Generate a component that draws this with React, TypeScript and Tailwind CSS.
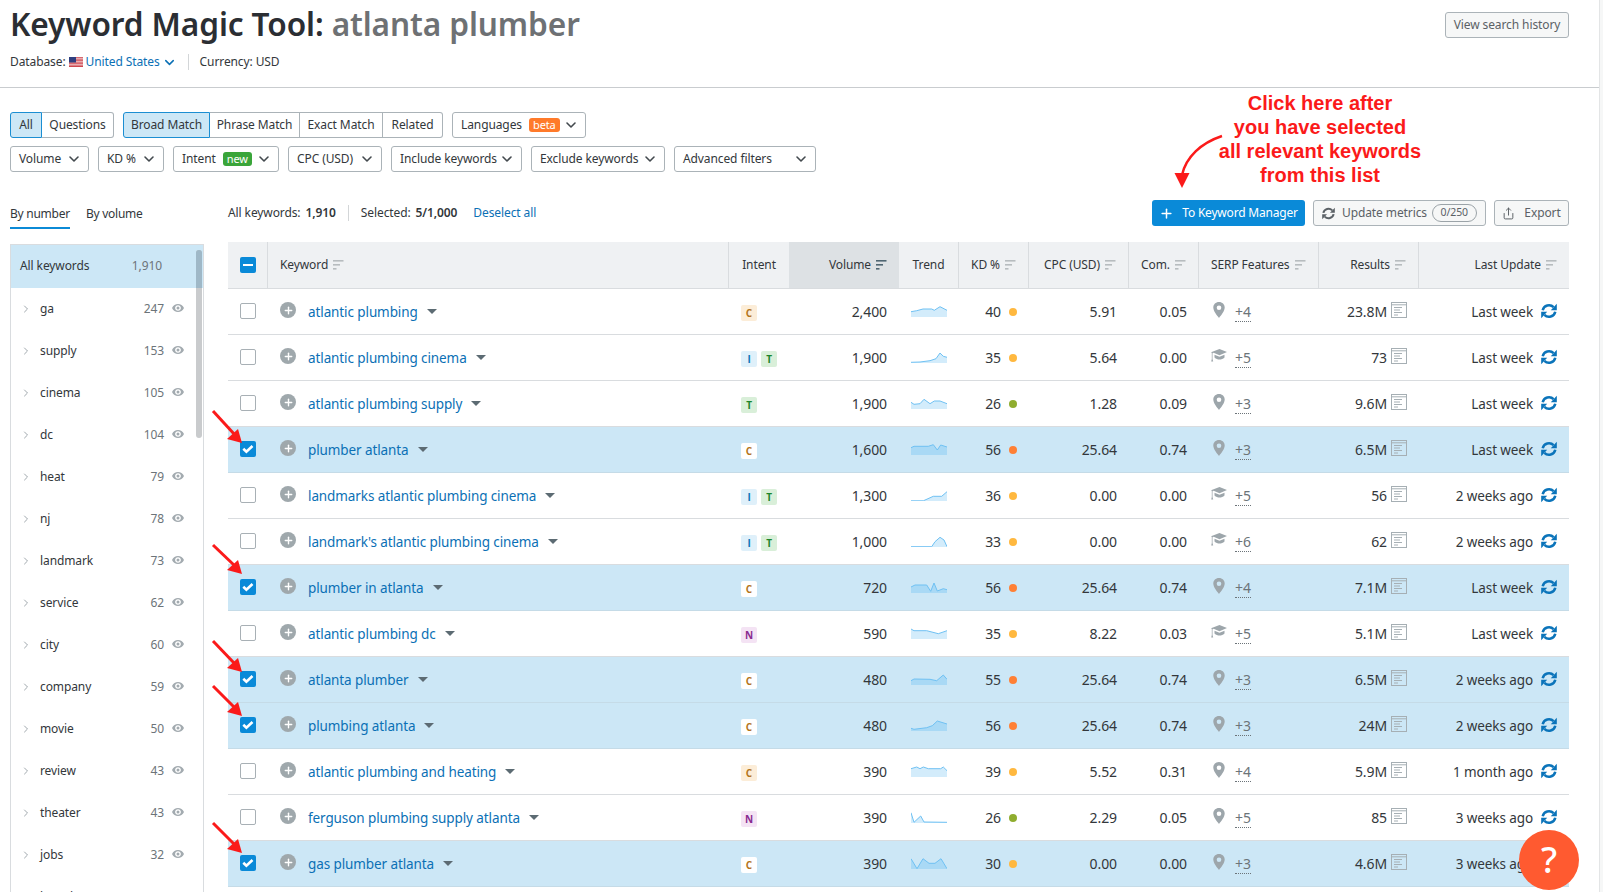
import React from "react";
import { ChevronDown, ChevronRight, Plus, Share } from "lucide-react";

type Row = {
  kw: string; intent: string[]; vol: string; kd: string; dot: string; cpc: string; com: string;
  serp: "pin" | "cap"; more: string; res: string; upd: string; sel?: boolean; pts: string;
};

const Y = "bg-[#ffb83f]";
const G = "bg-[#8fad2f]";
const O = "bg-[#ff8035]";

const rows: Row[] = [
  { kw: "atlantic plumbing", intent: ["C"], vol: "2,400", kd: "40", dot: Y, cpc: "5.91", com: "0.05", serp: "pin", more: "+4", res: "23.8M", upd: "Last week", pts: "0,6.7 5.7,5.7 12,4 20.7,4 23.3,5.3 29,1.7 36,5.3" },
  { kw: "atlantic plumbing cinema", intent: ["I", "T"], vol: "1,900", kd: "35", dot: Y, cpc: "5.64", com: "0.00", serp: "cap", more: "+5", res: "73", upd: "Last week", pts: "0,11.3 9,11 19,9.7 25,7.7 29,2 32.3,5.3 36,6.3" },
  { kw: "atlantic plumbing supply", intent: ["T"], vol: "1,900", kd: "26", dot: G, cpc: "1.28", com: "0.09", serp: "pin", more: "+3", res: "9.6M", upd: "Last week", pts: "0,5.3 3,7.3 9,6.7 13,2.3 19,6.7 23.3,4 29,4 36,6.7" },
  { kw: "plumber atlanta", intent: ["C"], vol: "1,600", kd: "56", dot: O, cpc: "25.64", com: "0.74", serp: "pin", more: "+3", res: "6.5M", upd: "Last week", sel: true, pts: "0,4.7 3,3.3 17.3,3.3 22.3,1.7 26.3,7 29.7,2 36,4" },
  { kw: "landmarks atlantic plumbing cinema", intent: ["I", "T"], vol: "1,300", kd: "36", dot: Y, cpc: "0.00", com: "0.00", serp: "cap", more: "+5", res: "56", upd: "2 weeks ago", pts: "0,11.8 12.3,11.8 22.3,7.3 30.7,7.3 36,2.7" },
  { kw: "landmark's atlantic plumbing cinema", intent: ["I", "T"], vol: "1,000", kd: "33", dot: Y, cpc: "0.00", com: "0.00", serp: "cap", more: "+6", res: "62", upd: "2 weeks ago", pts: "0,11.7 20.7,11.7 24,6.7 29,2.3 33,5 36,11.7" },
  { kw: "plumber in atlanta", intent: ["C"], vol: "720", kd: "56", dot: O, cpc: "25.64", com: "0.74", serp: "pin", more: "+4", res: "7.1M", upd: "Last week", sel: true, pts: "0,6 4,4 15.7,4 19.7,10.3 23,2 26.3,10 32.3,7.7 36,8.7" },
  { kw: "atlantic plumbing dc", intent: ["N"], vol: "590", kd: "35", dot: Y, cpc: "8.22", com: "0.03", serp: "cap", more: "+5", res: "5.1M", upd: "Last week", pts: "0,2 3,3.7 15.7,3.7 27.3,6.7 36,3.7" },
  { kw: "atlanta plumber", intent: ["C"], vol: "480", kd: "55", dot: O, cpc: "25.64", com: "0.74", serp: "pin", more: "+3", res: "6.5M", upd: "2 weeks ago", sel: true, pts: "0,7.7 3,6 19,6.3 25.7,7.7 32.3,2 36,6.3" },
  { kw: "plumbing atlanta", intent: ["C"], vol: "480", kd: "56", dot: O, cpc: "25.64", com: "0.74", serp: "pin", more: "+3", res: "24M", upd: "2 weeks ago", sel: true, pts: "0,9.3 3,10.3 15.7,8.7 21.3,6.7 26.3,2 36,5" },
  { kw: "atlantic plumbing and heating", intent: ["C"], vol: "390", kd: "39", dot: Y, cpc: "5.52", com: "0.31", serp: "pin", more: "+4", res: "5.9M", upd: "1 month ago", pts: "0,3.7 5.7,2 9,3.7 12.3,2 17.3,3.7 29.7,3.7 32.3,2 36,5.7" },
  { kw: "ferguson plumbing supply atlanta", intent: ["N"], vol: "390", kd: "26", dot: G, cpc: "2.29", com: "0.05", serp: "pin", more: "+5", res: "85", upd: "3 weeks ago", pts: "0,1.7 3,11.3 9.7,5 13,11 36,11.3" },
  { kw: "gas plumber atlanta", intent: ["C"], vol: "390", kd: "30", dot: Y, cpc: "0.00", com: "0.00", serp: "pin", more: "+3", res: "4.6M", upd: "3 weeks ago", sel: true, pts: "0,1.7 6,11.7 12,1.7 18,6.3 24,6.3 30,1.7 36,11.7" },
];

const side: [string, string][] = [
  ["ga", "247"], ["supply", "153"], ["cinema", "105"], ["dc", "104"], ["heat", "79"], ["nj", "78"], ["landmark", "73"],
  ["service", "62"], ["city", "60"], ["company", "59"], ["movie", "50"], ["review", "43"], ["theater", "43"], ["jobs", "32"], ["brand", "31"],
];

const GRID = "grid grid-cols-[40px_461px_60px_110px_60px_70px_100px_70px_120px_100px_150px]";

function SortIcon({ dark }: { dark?: boolean }) {
  const c = dark ? "#4f6672" : "#b7bcbf";
  return (
    <svg width="11" height="10" viewBox="0 0 11 10" className="shrink-0">
      <rect x="0" y="0" width="10.5" height="1.6" fill={c} />
      <rect x="0" y="4" width="7" height="1.6" fill={c} />
      <rect x="0" y="8" width="3.5" height="1.6" fill={c} />
    </svg>
  );
}

function Sync({ size, color, className = "" }: { size: number; color: string; className?: string }) {
  return (
    <svg width={size} height={size} viewBox="0 0 16 16" className={`shrink-0 ${className}`}>
      <path d="M1.700 7.200A6.400 6.400 0 0 1 12.600 4.200" fill="none" stroke={color} strokeWidth="2.500" />
      <polygon points="15.800,.8 15.800,7.200 9.800,7.200" fill={color} />
      <path d="M14.300 8.800A6.400 6.400 0 0 1 3.400 11.800" fill="none" stroke={color} strokeWidth="2.500" />
      <polygon points=".2,15.200 .2,8.800 6.200,8.800" fill={color} />
    </svg>
  );
}

function Pin() {
  return (
    <svg width="12" height="16" viewBox="0 0 12 16">
      <path fillRule="evenodd" fill="#9da6ab" d="M6 0C2.700 0 .3 2.400.3 5.600c0 3.600 3.600 7.800 5.700 10.400 2.100-2.600 5.700-6.800 5.700-10.400C11.700 2.400 9.300 0 6 0zm0 3.400a2.300 2.300 0 1 1 0 4.600 2.300 2.300 0 0 1 0-4.600z" />
    </svg>
  );
}

function Cap() {
  return (
    <svg width="16" height="14" viewBox="0 0 16 14">
      <path fill="#9da6ab" d="M8.500 0 16 3 8.500 6.200 2.600 3.800 1.500 4.300V10l.7 2.500H.2L.8 10V3.800L0 3.200 8.500 0z" />
      <path fill="#9da6ab" d="M3.500 5.700 8.500 7.700 13.500 5.700V8.600C12 10 10.300 10.600 8.500 10.600S5 10 3.500 8.600V5.700z" />
    </svg>
  );
}

function Doc() {
  return (
    <svg width="16" height="16" viewBox="0 0 16 16" fill="none" stroke="#a6afb4" className="block">
      <rect x=".5" y=".5" width="15" height="15" />
      <path d="M.5 2.800h15M3 5.500h8M3 8h6M3 10.500h8M3 13h4" />
    </svg>
  );
}

function Eye() {
  return (
    <svg width="12" height="8" viewBox="0 0 12 8" className="mb-[2px] shrink-0">
      <path fillRule="evenodd" fill="#a3abb0" d="M6 0c2.600 0 4.800 1.600 6 4-1.200 2.400-3.400 4-6 4S1.200 6.400 0 4c1.200-2.400 3.400-4 6-4zm0 1.200C4.400 1.200 3.100 2.500 3.100 4S4.400 6.800 6 6.800 8.900 5.500 8.900 4 7.600 1.200 6 1.200zM6 2.500a1.500 1.500 0 1 1 0 3 1.500 1.500 0 0 1 0-3z" />
    </svg>
  );
}

function Check() {
  return (
    <svg width="16" height="16" viewBox="0 0 16 16" className="block">
      <rect width="16" height="16" rx="2" fill="#0a8ad8" />
      <path d="M3.300 7.800 6.400 10.800 12.500 5" fill="none" stroke="#fff" strokeWidth="2.600" />
    </svg>
  );
}

function Btn({ children, className = "", active = false }: { children: React.ReactNode; className?: string; active?: boolean }) {
  return (
    <div className={`flex h-[26px] items-center whitespace-nowrap text-[12px] text-[#33373b] ${active ? "bg-[#cce7f6] border border-[#1b8ed2] rounded-[3px]" : "bg-white border border-[#abb3b8] rounded-[3px]"} ${className}`}>
      {children}
    </div>
  );
}

function Drop({ label, w, badge }: { label: string; w: string; badge?: React.ReactNode }) {
  return (
    <Btn className={`${w} justify-between pl-[8px] pr-[6px]`}>
      <span className="flex items-center gap-[7px]">{label}{badge}</span>
      <ChevronDown size={16} strokeWidth={2.4} className="text-[#43494e]" />
    </Btn>
  );
}

function Badge({ t, sel }: { t: string; sel?: boolean }) {
  const map: Record<string, string> = {
    C: `${sel ? "bg-white" : "bg-[#fcedd8]"} text-[#b3741c]`,
    I: `${sel ? "bg-white" : "bg-[#dff0fa]"} text-[#0b74b8]`,
    T: `${sel ? "bg-white" : "bg-[#d9efd9]"} text-[#1c852b]`,
    N: `${sel ? "bg-white" : "bg-[#f4e3f4]"} text-[#8a2a90]`,
  };
  return <span className={`mt-[3px] flex h-4 w-4 items-center justify-center rounded-[2px] text-[10px] font-bold font-['Open_Sans',sans-serif] ${map[t]}`}>{t}</span>;
}

function Spark({ pts, sel }: { pts: string; sel?: boolean }) {
  return (
    <svg width="36" height="12" viewBox="0 0 36 12" className="mb-[2px]">
      <polygon points={`0,12 ${pts} 36,12`} fill={sel ? "#a9d9f5" : "#d3ecfb"} />
      <polyline points={pts} fill="none" stroke="#6fc1f3" strokeWidth="1" />
    </svg>
  );
}

function Head({ label, sortable = true, dark, align = "right", className = "" }: { label: string; sortable?: boolean; dark?: boolean; align?: "left" | "right" | "center"; className?: string }) {
  const j = align === "left" ? "justify-start" : align === "center" ? "justify-center" : "justify-end";
  return (
    <div className={`flex items-center gap-[5px] whitespace-nowrap border-r border-[#d9dcdf] px-3 text-[12px] text-[#33373b] last:border-r-0 ${j} ${dark ? "bg-[#dde1e4]" : ""} ${className}`}>
      <span>{label}</span>
      {sortable && <SortIcon dark={dark} />}
    </div>
  );
}

function TableRow({ r }: { r: Row }) {
  return (
    <div className={`${GRID} h-[46px] whitespace-nowrap border-b text-[14px] text-[#33373b] ${r.sel ? "bg-[#cce7f6] border-[#c5dbe7]" : "bg-white border-[#d9dcdf]"}`}>
      <div className="flex items-center justify-center pb-[2px]">
        {r.sel ? <Check /> : <span className="h-4 w-4 rounded-[2px] border border-[#a8b0b5] bg-white" />}
      </div>
      <div className="flex items-center pl-3">
        <span className="mb-[3px] mr-3 flex h-4 w-4 items-center justify-center rounded-full bg-[#9fa8ac]">
          <Plus size={11} strokeWidth={3} className="text-white" />
        </span>
        <span className="mt-[1px] text-[13.5px] text-[#0b70b5]">{r.kw}</span>
        <span className="ml-[9px] h-0 w-0 border-x-[5px] border-t-[5px] border-x-transparent border-t-[#5c6b73]" />
      </div>
      <div className="flex items-center gap-1 pl-3">
        {r.intent.map((t) => <Badge key={t} t={t} sel={r.sel} />)}
      </div>
      <div className="flex items-center justify-end pr-3">{r.vol}</div>
      <div className="flex items-center justify-center"><Spark pts={r.pts} sel={r.sel} /></div>
      <div className="flex items-center justify-end gap-[8px] pr-[12px]">
        <span>{r.kd}</span>
        <span className={`h-2 w-2 rounded-full ${r.dot}`} />
      </div>
      <div className="flex items-center justify-end pr-3">{r.cpc}</div>
      <div className="flex items-center justify-end pr-3">{r.com}</div>
      <div className="flex items-center pl-[12px] text-[#6c7479]">
        <span className="mb-[3px] flex w-[16px] justify-center">{r.serp === "pin" ? <Pin /> : <Cap />}</span>
        <span className="ml-[8px] mt-[1px] border-b border-dotted border-[#6c7479] leading-[18px]">{r.more}</span>
      </div>
      <div className="flex items-center justify-end gap-[4px] pr-3">
        <span>{r.res}</span>
        <span className="mb-[3px]"><Doc /></span>
      </div>
      <div className="flex items-center justify-end gap-[8px] pr-3">
        <span className="mt-[1px] text-[13.5px]">{r.upd}</span>
        <Sync size={16} color="#0b74ba" className="mb-[2px]" />
      </div>
    </div>
  );
}

const arrows: [number, number][] = [[411, 443], [545, 574], [641, 672], [686, 716], [823, 853]];

export default function App() {
  return (
    <div className="relative h-[892px] w-full overflow-hidden bg-[#f6f7f7] tracking-[-0.1px] font-['Noto_Sans',sans-serif]">
      <div className="h-full w-[1600px] border-r border-[#e3e5e6] bg-white">
        <header className="flex h-[88px] justify-between border-b border-[#c9cccf] pl-[10px] pr-[30px]">
          <div>
            <h1 className="mt-[5px] whitespace-nowrap text-[31.6px] leading-[38px] font-semibold text-[#2b2e33]">
              Keyword Magic Tool: <span className="text-[#6e7174]">atlanta plumber</span>
            </h1>
            <div className="mt-[11px] flex h-4 items-center whitespace-nowrap text-[12px] text-[#33373b]">
              <span>Database:</span>
              <svg width="14" height="10" viewBox="0 0 14 10" className="ml-[3px] mr-[3px]">
                <rect width="14" height="10" fill="#fff" />
                <path d="M0 .7h14M0 2.200h14M0 3.700h14M0 5.200h14M0 6.700h14M0 8.200h14M0 9.500h14" stroke="#c8323c" strokeWidth=".9" />
                <rect width="7" height="5.500" fill="#2f3f80" />
              </svg>
              <span className="text-[#0b70b5]">United States</span>
              <ChevronDown size={15} strokeWidth={2.4} className="ml-[2px] text-[#0b70b5]" />
              <span className="mx-[11px] h-4 w-px bg-[#d3d6d8]" />
              <span>Currency: USD</span>
            </div>
          </div>
          <Btn className="mt-[12px] w-[124px] justify-center bg-[#f6f7f7]! text-[#5b6166]!">View search history</Btn>
        </header>

        <div className="ml-[10px] mt-[24px] flex gap-[9px]">
          <div className="flex">
            <Btn active className="w-[32px] justify-center rounded-r-none">All</Btn>
            <Btn className="w-[72px] justify-center rounded-l-none border-l-0">Questions</Btn>
          </div>
          <div className="flex">
            <Btn active className="w-[87px] justify-center rounded-r-none">Broad Match</Btn>
            <Btn className="w-[90px] justify-center rounded-none border-l-0">Phrase Match</Btn>
            <Btn className="w-[83px] justify-center rounded-none border-l-0">Exact Match</Btn>
            <Btn className="w-[60px] justify-center rounded-l-none border-l-0">Related</Btn>
          </div>
          <Drop label="Languages" w="w-[134px]" badge={<span className="flex h-[14px] items-center rounded-[3px] bg-[#ff7a2a] px-[4px] pb-[2px] text-[11px] leading-none text-white">beta</span>} />
        </div>
        <div className="ml-[10px] mt-[8px] flex gap-[9px]">
          <Drop label="Volume" w="w-[79px]" />
          <Drop label="KD %" w="w-[66px]" />
          <Drop label="Intent" w="w-[106px]" badge={<span className="flex h-[14px] items-center rounded-[3px] bg-[#3aa53a] px-[4px] pb-[2px] text-[11px] leading-none text-white">new</span>} />
          <Drop label="CPC (USD)" w="w-[94px]" />
          <Drop label="Include keywords" w="w-[131px]" />
          <Drop label="Exclude keywords" w="w-[134px]" />
          <Drop label="Advanced filters" w="w-[142px]" />
        </div>

        <div className="ml-[10px] mt-[28px] flex gap-[24px]">
          <aside className="flex h-[692px] w-[194px] shrink-0 flex-col">
            <div className="flex h-[29px] gap-[16px] whitespace-nowrap text-[12px] tracking-[-0.25px] text-[#33373b]">
              <span className="h-[29px] border-b-2 border-[#0b8ad6] pt-[5px]">By number</span>
              <span className="pt-[5px]">By volume</span>
            </div>
            <div className="relative mt-[15px] flex-1 overflow-hidden border-x border-t border-[#d9dcdf] whitespace-nowrap text-[12px] text-[#33373b]">
              <div className="flex h-[43px] items-center justify-between bg-[#cce7f6] pb-[2px] pl-[9px] pr-[41px]">
                <span>All keywords</span>
                <span className="text-[#6c7479]">1,910</span>
              </div>
              {side.map(([n, c]) => (
                <div key={n} className="flex h-[42px] items-center pl-[9px] pr-[19px]">
                  <ChevronRight size={12} strokeWidth={2} className="text-[#a0a8ad]" />
                  <span className="ml-[8px] flex-1">{n}</span>
                  <span className="mr-[8px] text-[#6c7479]">{c}</span>
                  <Eye />
                </div>
              ))}
              <div className="absolute right-[1px] top-[5px] h-[188px] w-[6px] rounded-[3px] bg-[#c9cbcd]">
                <div className="h-[38px] rounded-t-[3px] bg-[#9fb8c7]" />
              </div>
            </div>
          </aside>

          <main className="w-[1341px]">
            <div className="flex h-[26px] items-center whitespace-nowrap text-[12px]">
              <span className="text-[#33373b]">All keywords:</span>
              <b className="ml-[5px] font-semibold text-[#33373b]">1,910</b>
              <span className="mx-[12px] h-4 w-px bg-[#d3d6d8]" />
              <span className="text-[#33373b]">Selected:</span>
              <b className="ml-[5px] font-semibold text-[#33373b]">5/1,000</b>
              <span className="ml-[16px] text-[#0b70b5]">Deselect all</span>
              <div className="ml-auto flex gap-[8px]">
                <div className="flex h-[26px] w-[153px] items-center justify-center gap-[8px] rounded-[3px] bg-[#0a8ad8] tracking-[-0.2px] text-white">
                  <Plus size={15} strokeWidth={2.4} />
                  <span>To Keyword Manager</span>
                </div>
                <Btn className="w-[173px] justify-between bg-[#f6f7f7]! pl-[8px] pr-[8px] text-[#5b6166]!">
                  <span className="flex items-center gap-[7px]"><Sync size={13} color="#5b6166" />Update metrics</span>
                  <span className="flex h-[18px] items-center rounded-full border border-[#9ba3a8] px-[8px] text-[10.5px]">0/250</span>
                </Btn>
                <Btn className="w-[75px] justify-center gap-[9px] bg-[#f6f7f7]! text-[#5b6166]!">
                  <Share size={13} strokeWidth={1.8} />Export
                </Btn>
              </div>
            </div>

            <div className="mt-4">
              <div className={`${GRID} h-[47px] border-b border-[#d9dcdf] bg-[#eff1f3]`}>
                <div className="flex items-center justify-center border-r border-[#d9dcdf]">
                  <span className="flex h-4 w-4 items-center justify-center rounded-[2px] bg-[#0a8ad8]">
                    <span className="h-[2px] w-[10px] bg-white" />
                  </span>
                </div>
                <Head label="Keyword" align="left" />
                <Head label="Intent" sortable={false} align="center" className="border-r-0" />
                <Head label="Volume" dark className="border-r-0" />
                <Head label="Trend" sortable={false} align="center" />
                <Head label="KD %" />
                <Head label="CPC (USD)" />
                <Head label="Com." />
                <Head label="SERP Features" align="left" />
                <Head label="Results" />
                <Head label="Last Update" />
              </div>
              {rows.map((r) => <TableRow key={r.kw} r={r} />)}
            </div>
          </main>
        </div>
      </div>

      <div className="absolute left-[1200px] top-[91px] w-[240px] text-center text-[20px] leading-[24px] font-bold tracking-normal text-[#fb1a1a] font-['Liberation_Sans',sans-serif]">
        <div>Click here after</div>
        <div>you have selected</div>
        <div>all relevant keywords</div>
        <div>from this list</div>
      </div>

      <svg className="pointer-events-none absolute left-0 top-0" width="1603" height="892">
        <path d="M1222 136C1201 143 1186 157 1182 175" fill="none" stroke="#fb1a1a" strokeWidth="2.500" />
        <polygon points="1174.500,173 1189.500,173 1182,188" fill="#fb1a1a" />
        {arrows.map(([a, b]) => (
          <g key={a}>
            <line x1="213" y1={a} x2="235" y2={b - 8} stroke="#fb1a1a" strokeWidth="3" />
            <polygon points={`242,${b} 227,${b - 4} 238,${b - 14}`} fill="#fb1a1a" />
          </g>
        ))}
      </svg>

      <div className="absolute left-[1519px] top-[830px] flex h-[60px] w-[60px] items-center justify-center rounded-full bg-[#ff5a30] text-[36px] font-medium leading-none text-white">?</div>
    </div>
  );
}
